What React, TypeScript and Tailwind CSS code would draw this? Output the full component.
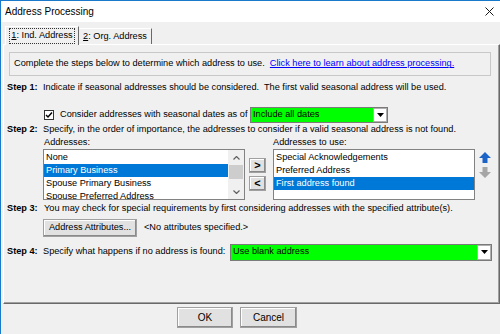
const Chevron = ({ up }: { up?: boolean }) => (
  <svg width="7" height="4" viewBox="0 0 7 4">
    <path d={up ? "M0.5 3.5 L3.5 0.5 L6.5 3.5" : "M0.5 0.5 L3.5 3.5 L6.5 0.5"} fill="none" stroke="#606060" strokeWidth="1.2" />
  </svg>
);

const Tri = () => (
  <svg width="7" height="4" viewBox="0 0 7 4">
    <path d="M0 0 L7 0 L3.5 4 Z" fill="#000" />
  </svg>
);

const Arrow = ({ up, color }: { up?: boolean; color: string }) => (
  <svg width="12" height="11" viewBox="0 0 12 11">
    <path
      d={up ? "M6 0 L12 6 L8.5 6 L8.5 11 L3.5 11 L3.5 6 L0 6 Z" : "M6 11 L12 5 L8.5 5 L8.5 0 L3.5 0 L3.5 5 L0 5 Z"}
      fill={color}
    />
  </svg>
);

const btn =
  "bg-[#e1e1e1] border border-[#a0a0a0] shadow-[inset_-1px_-1px_0_#8a8a8a,inset_1px_1px_0_#ffffff] flex items-center justify-center";

function ListBox({ items, selected, scroll }: { items: string[]; selected: number; scroll?: boolean }) {
  return (
    <div className="w-[202px] h-[51px] border border-[#828282] bg-white flex overflow-hidden">
      <div className="flex-1 pt-[1px] overflow-hidden">
        {items.map((it, i) => (
          <div
            key={it}
            className={
              "h-[13px] flex items-center pl-[2px] whitespace-nowrap " +
              (i === selected ? "bg-[#0078d7] text-white" : "")
            }
          >
            {it}
          </div>
        ))}
      </div>
      {scroll && (
        <div className="w-[16px] bg-[#f0f0f0] flex flex-col">
          <div className="h-[15px] flex items-center justify-center">
            <Chevron up />
          </div>
          <div className="h-[14px] mx-[1px] bg-[#cdcdcd]" />
          <div className="flex-1" />
          <div className="h-[15px] flex items-center justify-center">
            <Chevron />
          </div>
        </div>
      )}
    </div>
  );
}

function Step({ n }: { n: number }) {
  return <span className="w-[36px] shrink-0 font-bold">Step {n}:</span>;
}

export default function App() {
  return (
    <div className="w-[500px] h-[334px] overflow-hidden bg-[#f0f0f0] border-l border-[#1979ca] font-['Liberation_Sans',Arial,sans-serif] text-[9.2px] text-black leading-none flex flex-col">
      <div className="h-[22px] shrink-0 bg-white border-t border-[#1979ca] flex items-center justify-between pl-[4px] pr-[6px]">
        <span className="text-[10px]">Address Processing</span>
        <svg width="9" height="9" viewBox="0 0 9 9">
          <path d="M0.5 0.5 L8.5 8.5 M8.5 0.5 L0.5 8.5" stroke="#1a1a1a" strokeWidth="1" />
        </svg>
      </div>
      <div className="h-[22px] shrink-0 flex items-end pl-[4px] relative z-10">
        <div className="h-[19px] mb-[-1px] w-[74px] bg-[#f0f0f0] border-t border-l border-white border-r border-r-[#696969] flex items-center justify-center">
          <span className="border border-dotted border-[#333] px-[1px] py-[2px]">
            <span className="underline">1</span>: Ind. Address
          </span>
        </div>
        <div className="h-[16px] w-[73px] border-t border-white border-r border-r-[#696969] flex items-center justify-center">
          <span>
            <span className="underline">2</span>: Org. Address
          </span>
        </div>
      </div>
      <div className="ml-[2px] w-[497px] h-[260px] shrink-0 border-t border-l border-white border-r border-b border-r-[#696969] border-b-[#696969] shadow-[inset_-1px_-1px_0_#a0a0a0] flex flex-col">
        <div className="ml-[5px] mt-[7px] w-[482px] h-[24px] border border-[#c8c8c8] flex items-center pl-[4px] whitespace-nowrap">
          <span>Complete the steps below to determine which address to use.&nbsp;&nbsp;</span>
          <span className="text-[#0000ff] underline">Click here to learn about address processing.</span>
        </div>
        <div className="mt-[4px] h-[16px] flex items-center pl-[3px] whitespace-nowrap">
          <Step n={1} />
          <span>Indicate if seasonal addresses should be considered.&nbsp; The first valid seasonal address will be used.</span>
        </div>
        <div className="mt-[10px] h-[17px] flex items-center pl-[40px] whitespace-nowrap">
          <div className="w-[10px] h-[10px] bg-white border border-[#333] flex items-center justify-center">
            <svg width="8" height="8" viewBox="0 0 8 8">
              <path d="M1 4 L3 6 L7 1.5" fill="none" stroke="#000" strokeWidth="1.5" />
            </svg>
          </div>
          <span className="ml-[6px] w-[190px]">Consider addresses with seasonal dates as of</span>
          <div className="w-[138px] h-[16px] bg-[#00ff00] border border-[#7a7a7a] flex items-center justify-between pl-[2px]">
            <span>Include all dates</span>
            <div className="w-[14px] h-[14px] bg-white border border-[#b0b0b0] flex items-center justify-center">
              <Tri />
            </div>
          </div>
        </div>
        <div className="h-[14px] flex items-center pl-[3px] whitespace-nowrap">
          <Step n={2} />
          <span>Specify, in the order of importance, the addresses to consider if a valid seasonal address is not found.</span>
        </div>
        <div className="h-[12px] flex items-center pl-[40px] whitespace-nowrap">
          <span className="w-[229px]">Addresses:</span>
          <span>Addresses to use:</span>
        </div>
        <div className="h-[51px] flex pl-[39px]">
          <ListBox
            items={["None", "Primary Business", "Spouse Primary Business", "Spouse Preferred Address"]}
            selected={1}
            scroll
          />
          <div className="ml-[4px] pt-[9px] flex flex-col gap-[3px]">
            <div className={btn + " w-[17px] h-[15px] text-[11px] font-bold"}>&gt;</div>
            <div className={btn + " w-[17px] h-[15px] text-[11px] font-bold"}>&lt;</div>
          </div>
          <div className="ml-[7px]">
            <ListBox items={["Special Acknowledgements", "Preferred Address", "First address found"]} selected={2} />
          </div>
          <div className="ml-[4px] pt-[3px] flex flex-col gap-[4px]">
            <Arrow up color="#1b63c6" />
            <Arrow color="#a6a6a6" />
          </div>
        </div>
        <div className="h-[18px] flex items-center pl-[3px] whitespace-nowrap">
          <Step n={3} />
          <span className="ml-[1px]">You may check for special requirements by first considering addresses with the specified attribute(s).</span>
        </div>
        <div className="mt-[1px] h-[18px] flex items-center pl-[39px] whitespace-nowrap">
          <div className={btn + " w-[94px] h-[18px]"}>Address Attributes...</div>
          <span className="ml-[7px]">&lt;No attributes specified.&gt;</span>
        </div>
        <div className="mt-[6px] h-[18px] flex items-center pl-[3px] pr-[7px] whitespace-nowrap">
          <Step n={4} />
          <span>Specify what happens if no address is found:</span>
          <div className="ml-auto w-[262px] h-[17px] bg-[#00ff00] border border-[#7a7a7a] flex items-center justify-between pl-[2px]">
            <span>Use blank address</span>
            <div className="w-[14px] h-[15px] bg-white border border-[#b0b0b0] flex items-center justify-center">
              <Tri />
            </div>
          </div>
        </div>
      </div>
      <div className="mt-[3px] flex pl-[176px] gap-[7px]">
        <div className={btn + " w-[56px] h-[21px] text-[10px]"}>OK</div>
        <div className={btn + " w-[57px] h-[21px] text-[10px]"}>Cancel</div>
      </div>
    </div>
  );
}
